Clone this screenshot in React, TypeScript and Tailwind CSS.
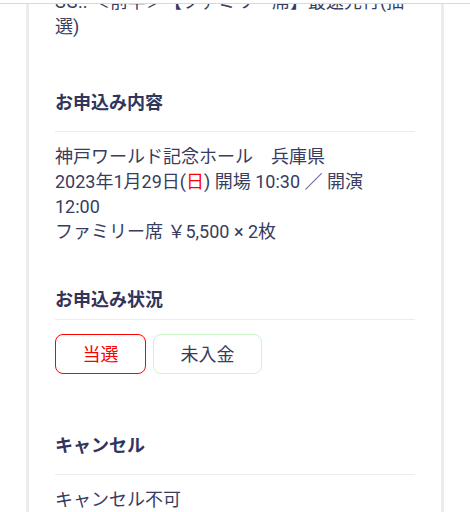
import React from 'react';

const Section: React.FC<{ title: string; headClass: string; gapClass: string; children: React.ReactNode }> = ({ title, headClass, gapClass, children }) => (
  <section className={headClass}>
    <h2 className={`text-[18px] leading-[25px] font-bold text-[#31355a] border-b border-[#ececec] ${gapClass}`}>{title}</h2>
    {children}
  </section>
);

const App: React.FC = () => {
  return (
    <div className="relative h-screen bg-white overflow-hidden font-['Roboto','Noto_Sans_CJK_JP',sans-serif]">
      {/* header edge */}
      <div className="fixed top-0 left-0 right-0 h-[4px] bg-white border-b border-[#e6d3d5] z-10" />

      <div className="ml-[26px] w-[418px] border-x-[3px] border-[#ececec] px-[26px] pb-10 -mt-[11px]">
        <p className="text-[18px] leading-[25px] text-[#383c60]">
          SG.. ＜前半＞【ファミリー席】最速先行(抽選)
        </p>

        <Section title="お申込み内容" headClass="mt-[51px]" gapClass="pb-4">
          <div className="mt-3 text-[18px] leading-[25px] text-[#383c60]">
            <p>神戸ワールド記念ホール　兵庫県</p>
            <p>
              2023年1月29日(<span className="text-[#ff0000]">日</span>) 開場 10:30 ／ 開演
              <br />
              12:00
            </p>
            <p>ファミリー席 ￥5,500 × 2枚</p>
          </div>
        </Section>

        <Section title="お申込み状況" headClass="mt-[43px]" gapClass="pb-[7px]">
          <div className="mt-[14px] flex gap-[7px]">
            <div className="w-[91px] h-[40px] rounded-lg border border-[#ff0000] flex items-center justify-center text-[18px] text-[#ff0000]">
              当選
            </div>
            <div className="w-[109px] h-[40px] rounded-lg border border-[#c9f7c9] flex items-center justify-center text-[18px] text-[#383c60]">
              未入金
            </div>
          </div>
        </Section>

        <Section title="キャンセル" headClass="mt-[59px]" gapClass="pb-4">
          <p className="mt-3 text-[18px] leading-[25px] text-[#383c60]">キャンセル不可</p>
        </Section>
      </div>
    </div>
  );
};

export default App;
